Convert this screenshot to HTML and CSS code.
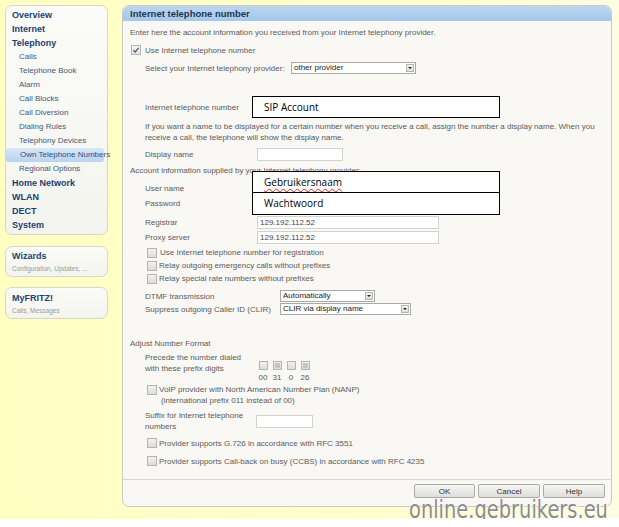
FILE: index.html
```html
<!DOCTYPE html>
<html>
<head>
<meta charset="utf-8">
<link rel="stylesheet" href="styles.css">
</head>
<body>
<div class="page">
  <nav class="sidebar">
    <div class="navbox nav-main">
      <a class="nav-item nav-top">Overview</a>
      <a class="nav-item nav-top">Internet</a>
      <a class="nav-item nav-top">Telephony</a>
      <a class="nav-item nav-sub">Calls</a>
      <a class="nav-item nav-sub">Telephone Book</a>
      <a class="nav-item nav-sub">Alarm</a>
      <a class="nav-item nav-sub">Call Blocks</a>
      <a class="nav-item nav-sub">Call Diversion</a>
      <a class="nav-item nav-sub">Dialing Rules</a>
      <a class="nav-item nav-sub">Telephony Devices</a>
      <a class="nav-item nav-sub nav-active">Own Telephone Numbers</a>
      <a class="nav-item nav-sub">Regional Options</a>
      <a class="nav-item nav-top">Home Network</a>
      <a class="nav-item nav-top">WLAN</a>
      <a class="nav-item nav-top">DECT</a>
      <a class="nav-item nav-top">System</a>
    </div>
    <div class="navbox nav-card nav-wizards">
      <div class="card-title">Wizards</div>
      <div class="card-sub">Configuration, Updates, ...</div>
    </div>
    <div class="navbox nav-card nav-fritz">
      <div class="card-title">MyFRITZ!</div>
      <div class="card-sub">Calls, Messages</div>
    </div>
  </nav>

  <section class="panel">
    <header class="panel-head">Internet telephone number</header>
    <div class="panel-body">
      <p class="r-intro">Enter here the account information you received from your Internet telephony provider.</p>
      <div class="row r-use">
        <span class="cb cb-checked"><svg width="8" height="8" viewBox="0 0 8 8"><path d="M1.5 4.2 L3.2 6 L6.6 1.8" fill="none" stroke="#4a5a78" stroke-width="1.3"/></svg></span>
        <span class="use-text">Use Internet telephone number</span>
      </div>
      <div class="row r-provider ind">
        <span class="lbl lbl-prov">Select your Internet telephony provider:</span>
        <span class="sel sel-prov">other provider<span class="sel-btn"></span></span>
      </div>
      <div class="row r-sip ind">
        <span class="lbl lbl-sip">Internet telephone number</span>
        <span class="annot annot-sip">SIP Account</span>
      </div>
      <p class="r-info ind">If you want a name to be displayed for a certain number when you receive a call, assign the number a display name. When you<br>receive a call, the telephone will show the display name.</p>
      <div class="row r-display ind">
        <span class="lbl">Display name</span>
        <span class="inp inp-display"></span>
      </div>
      <p class="r-account">Account information supplied by your Internet telephony provider:</p>
      <div class="creds ind">
        <div class="row r-cred"><span class="lbl">User name</span></div>
        <div class="row r-cred"><span class="lbl">Password</span></div>
        <div class="annot-group">
          <span class="annot annot-user"><span class="spell">Gebruikersnaam</span></span>
          <span class="annot annot-pass">Wachtwoord</span>
        </div>
      </div>
      <div class="row r-reg ind">
        <span class="lbl">Registrar</span>
        <span class="inp inp-wide">129.192.112.52</span>
      </div>
      <div class="row r-proxy ind">
        <span class="lbl">Proxy server</span>
        <span class="inp inp-wide">129.192.112.52</span>
      </div>
      <div class="cb-list">
        <div class="row r-cb"><span class="cb"></span><span class="cb-text cb-text-wide">Use Internet telephone number for registration</span></div>
        <div class="row r-cb"><span class="cb"></span><span class="cb-text">Relay outgoing emergency calls without prefixes</span></div>
        <div class="row r-cb"><span class="cb"></span><span class="cb-text">Relay special rate numbers without prefixes</span></div>
      </div>
      <div class="row r-dtmf ind">
        <span class="lbl lbl-dtmf">DTMF transmission</span>
        <span class="sel sel-dtmf">Automatically<span class="sel-btn"></span></span>
      </div>
      <div class="row r-clir ind">
        <span class="lbl lbl-dtmf">Suppress outgoing Caller ID (CLIR)</span>
        <span class="sel sel-clir">CLIR via display name<span class="sel-btn"></span></span>
      </div>
      <p class="r-adjust">Adjust Number Format</p>
      <div class="row r-precede ind">
        <span class="lbl lbl-2">Precede the number dialed<br>with these prefix digits</span>
        <div class="prefix">
          <span class="cb cb-sm"></span>
          <span class="cb cb-sm cb-fill"></span>
          <span class="cb cb-sm"></span>
          <span class="cb cb-sm cb-fill"></span>
          <span class="digit">00</span>
          <span class="digit">31</span>
          <span class="digit">0</span>
          <span class="digit">26</span>
        </div>
      </div>
      <div class="row r-nanp">
        <span class="cb"></span>
        <span class="cb-text nanp-text">VoIP provider with North American Number Plan (NANP)<br><span class="nanp-2">(international prefix 011 instead of 00)</span></span>
      </div>
      <div class="row r-suffix ind">
        <span class="lbl lbl-2">Suffix for Internet telephone<br>numbers</span>
        <span class="inp inp-suffix"></span>
      </div>
      <div class="row r-g726"><span class="cb"></span><span class="cb-text">Provider supports G.726 in accordance with RFC 3551</span></div>
      <div class="row r-ccbs"><span class="cb"></span><span class="cb-text">Provider supports Call-back on busy (CCBS) in accordance with RFC 4235</span></div>
    </div>
    <footer class="panel-foot">
      <button class="btn btn-ok">OK</button>
      <button class="btn">Cancel</button>
      <button class="btn">Help</button>
    </footer>
  </section>

  <div class="watermark">online.gebruikers.eu</div>
</div>
</body>
</html>
```

FILE: styles.css
```css
* { box-sizing: border-box; margin: 0; padding: 0; }
body {
  margin: 0;
  background: #ffffff;
  font-family: "Liberation Sans", Arial, sans-serif;
  font-size: 8px;
  color: #5a5a5a;
}
.page {
  position: relative;
  width: 619px;
  height: 519px;
  background: linear-gradient(90deg, #ffffc2 0%, #fffed0 70%, #fdfde4 100%);
  display: flex;
  gap: 14px;
  padding: 5px 7px 0 5px;
}

/* sidebar */
.sidebar { width: 103px; flex: none; display: flex; flex-direction: column; }
.navbox {
  background: linear-gradient(#fbfbf8, #f4f4ef);
  border: 1px solid #d6d6cc;
  border-radius: 7px;
}
.nav-main { height: 230px; padding: 2px 0; }
.nav-item { display: block; height: 14px; line-height: 14px; white-space: nowrap; }
.nav-top { padding-left: 6px; font-weight: bold; font-size: 9px; color: #213f70; }
.nav-sub { padding-left: 13px; font-size: 8px; color: #42597a; }
.nav-active {
  margin-right: 3px;
  padding-left: 14px;
  border-radius: 3px;
  background: linear-gradient(#d6e6f9, #b9d3f2);
  color: #34507a;
}
.nav-card { padding: 3px 6px 2px; height: 31px; }
.nav-wizards { margin-top: 11px; }
.nav-fritz { margin-top: 10px; height: 32px; padding-top: 4px; }
.card-title { height: 12px; line-height: 12px; font-weight: bold; font-size: 9px; color: #213f70; }
.card-sub { margin-top: 1px; height: 11px; line-height: 11px; font-size: 6.5px; color: #9a9a96; white-space: nowrap; }

/* panel */
.panel {
  width: 490px;
  height: 502px;
  flex: none;
  border: 1px solid #cbcbc4;
  border-radius: 7px;
  background: #f9f8f5;
  display: flex;
  flex-direction: column;
  overflow: hidden;
}
.panel-head {
  height: 15px;
  line-height: 15px;
  padding-left: 7px;
  background: linear-gradient(#bad6f1, #a5c7ea);
  font-weight: bold;
  font-size: 9.5px;
  color: #223750;
}
.panel-body { flex: 1; padding-left: 7px; position: relative; }
.panel-foot {
  height: 27px;
  border-top: 1px solid #d6d6d0;
  display: flex;
  justify-content: flex-end;
  gap: 3px;
  padding: 4px 6px 0 0;
}
.btn {
  width: 62px;
  height: 14px;
  border: 1px solid #a9a9a6;
  border-radius: 2px;
  background: linear-gradient(#f6f6f4, #dedede);
  font-family: "Liberation Sans", Arial, sans-serif;
  font-size: 8px;
  color: #333;
}
.btn-ok { width: 61px; }

/* rows */
.row { display: flex; align-items: center; white-space: nowrap; }
.ind { padding-left: 15px; }
.lbl { width: 112px; flex: none; }
.lbl-prov { width: 146px; }
.lbl-sip { width: 107px; }
.lbl-dtmf { width: 135px; }
.lbl-2 { width: 111px; line-height: 11px; }

.r-intro { margin-top: 6px; height: 12px; line-height: 12px; }
.r-use { margin-top: 5px; height: 12px; padding-left: 1px; }
.use-text { margin-left: 4px; }
.r-provider { margin-top: 5px; height: 14px; }
.r-sip { margin-top: 21px; height: 22px; }
.r-info { margin-top: 3px; height: 22px; line-height: 11px; }
.r-display { margin-top: 4px; height: 14px; }
.r-account { margin-top: 4px; height: 11px; line-height: 11px; }
.creds { position: relative; margin-top: 5px; }
.r-cred { height: 15px; }
.r-reg { margin-top: 5px; height: 13px; }
.r-proxy { margin-top: 2px; height: 13px; }
.cb-list { margin-top: 2px; }
.r-cb { height: 13px; padding-left: 17px; }
.r-dtmf { margin-top: 5px; height: 12px; }
.r-clir { margin-top: 1px; height: 12px; }
.r-adjust { margin-top: 23px; height: 12px; line-height: 12px; }
.r-precede { margin-top: 2px; height: 32px; align-items: flex-start; }
.r-nanp { height: 22px; padding-left: 17px; align-items: flex-start; line-height: 11px; }
.r-nanp .cb { margin-top: 1px; }
.nanp-2 { padding-left: 2px; }
.r-suffix { margin-top: 4px; height: 22px; }
.r-g726 { margin-top: 5px; height: 12px; padding-left: 17px; }
.r-ccbs { margin-top: 6px; height: 12px; padding-left: 17px; }

/* controls */
.cb {
  width: 10px;
  height: 10px;
  flex: none;
  border: 1px solid #b4b4b0;
  background: linear-gradient(#f2f2f0, #dcdcd8);
  display: inline-flex;
  align-items: center;
  justify-content: center;
}
.cb-checked { background: linear-gradient(#f4f4f2, #e2e2de); }
.cb-sm { width: 9px; height: 9px; justify-self: center; }
.cb-fill::after { content: ""; width: 5px; height: 5px; background: #c6c6c2; }
.cb-text { margin-left: 2px; }
.cb-text-wide { margin-left: 3px; }

.inp {
  height: 13px;
  line-height: 11px;
  border: 1px solid #d2d2cc;
  background: #fff;
  padding-left: 2px;
  color: #444;
}
.inp-display { width: 86px; }
.inp-wide { width: 182px; }
.inp-suffix { width: 57px; }

.sel {
  position: relative;
  height: 12px;
  line-height: 10px;
  border: 1px solid #a9a9a6;
  background: #fff;
  padding-left: 2px;
  color: #222;
}
.sel-prov { width: 125px; height: 12px; }
.sel-dtmf { width: 95px; height: 12px; }
.sel-clir { width: 131px; height: 12px; }
.sel-btn {
  position: absolute;
  right: 1px;
  top: 1px;
  width: 8px;
  height: 8px;
  border: 1px solid #b5b5b2;
  background: linear-gradient(#f6f6f4, #dcdcda);
  display: flex;
  align-items: center;
  justify-content: center;
}
.sel-btn::after {
  content: "";
  width: 0;
  height: 0;
  border-left: 2px solid transparent;
  border-right: 2px solid transparent;
  border-top: 2px solid #222;
}

.prefix {
  display: grid;
  grid-template-columns: repeat(4, 14px);
  row-gap: 2px;
  padding-top: 9px;
}
.digit { text-align: center; line-height: 11px; height: 11px; }

/* black annotation boxes */
.annot {
  display: flex;
  align-items: center;
  width: 248px;
  height: 22px;
  border: 1.5px solid #000;
  background: #fff;
  padding-left: 11px;
  font-family: "Open Sans", "Liberation Sans", sans-serif;
  font-size: 10px;
  color: #000;
}
.annot-group { position: absolute; top: -10px; left: 122px; display: flex; flex-direction: column; }
.annot-user { height: 22.5px; }
.annot-pass { margin-top: -1.5px; height: 22.5px; }
.spell { text-decoration: underline wavy #e02020; text-decoration-thickness: 1px; text-underline-offset: 2px; }

/* watermark overlay */
.watermark {
  position: absolute;
  left: 409px;
  top: 495px;
  font-family: "DejaVu Sans", sans-serif;
  font-size: 24px;
  line-height: 30px;
  color: #8c8c8c;
  transform: scaleX(0.81);
  transform-origin: 0 50%;
  text-shadow: 0 0 1px #fff, 1px 1px 0 #fff;
  white-space: nowrap;
}
```
